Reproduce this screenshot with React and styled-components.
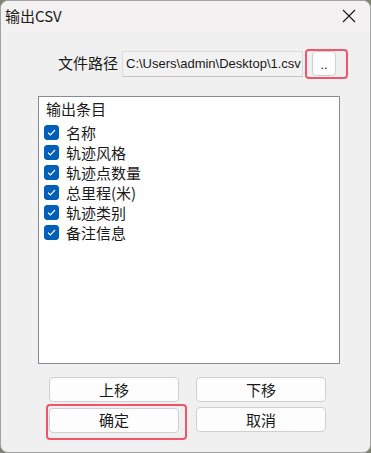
import { useState } from 'react';
import styled, { createGlobalStyle } from 'styled-components';

const fields = ['名称', '轨迹风格', '轨迹点数量', '总里程(米)', '轨迹类别', '备注信息'];

const GlobalStyle = createGlobalStyle`
  html, body {
    margin: 0;
    padding: 0;
    background: #7d8472;
  }
  * {
    box-sizing: border-box;
  }
`;

const Window = styled.div`
  width: 371px;
  height: 453px;
  background: #f0f0f0;
  border: 1px solid #a3a3a3;
  border-radius: 8px;
  overflow: hidden;
  display: flex;
  flex-direction: column;
  font-family: "Noto Sans CJK SC", "Liberation Sans", sans-serif;
  color: #1a1a1a;
`;

const TitleBar = styled.div`
  height: 31px;
  background: #f3f1f1;
  display: flex;
  align-items: center;
  justify-content: space-between;
  padding: 0 14px 2px 4px;
`;

const Title = styled.span`
  font-size: 15px;
  line-height: 20px;
`;

const CloseButton = styled.div`
  width: 14px;
  height: 14px;
  display: flex;
  cursor: pointer;
`;

const PathRow = styled.div`
  display: flex;
  align-items: flex-start;
  margin-top: 17px;
  padding-left: 57px;
`;

const Label = styled.span`
  font-size: 15px;
  line-height: 20px;
  margin-top: 4px;
  width: 64px;
  white-space: nowrap;
`;

const PathInput = styled.div`
  width: 181px;
  height: 26px;
  margin-top: 2px;
  background: #f2f2f2;
  border: 1px solid #dcdcdc;
  border-bottom-color: #c4c4c4;
  font-family: "Liberation Sans", Arial, sans-serif;
  font-size: 13px;
  line-height: 24px;
  padding-left: 3px;
  white-space: nowrap;
  overflow: hidden;
`;

const Highlight = styled.div`
  position: relative;
  &::after {
    content: '';
    position: absolute;
    left: ${({ $l }) => $l}px;
    top: ${({ $t }) => $t}px;
    right: ${({ $r }) => $r}px;
    bottom: ${({ $b }) => $b}px;
    border: 2px solid #f0566a;
    border-radius: 4px;
    pointer-events: none;
  }
`;

const BrowseButton = styled.button`
  width: 24px;
  height: 25px;
  margin: 2px 0 0 9px;
  padding: 0;
  background: #fdfdfd;
  border: 1px solid #d0d0d0;
  border-radius: 4px;
  font-family: "Liberation Sans", Arial, sans-serif;
  font-size: 13px;
  line-height: 26px;
  color: #1a1a1a;
`;

const ListBox = styled.div`
  margin: 19px 0 0 37px;
  width: 302px;
  height: 268px;
  background: #ffffff;
  border: 1px solid #878b96;
  padding: 2px 0 0 0;
`;

const ListHeader = styled.div`
  font-size: 15px;
  line-height: 20px;
  padding-left: 7px;
`;

const Items = styled.div`
  margin-top: 3px;
  display: flex;
  flex-direction: column;
`;

const Item = styled.label`
  height: 20px;
  display: flex;
  align-items: center;
  gap: 7px;
  padding-left: 5px;
  font-size: 15px;
  cursor: pointer;
`;

const CheckBox = styled.span`
  width: 15px;
  height: 15px;
  border-radius: 3px;
  background: ${({ $checked }) => ($checked ? '#005fb8' : '#ffffff')};
  border: 1px solid ${({ $checked }) => ($checked ? '#005fb8' : '#8a8a8a')};
  display: flex;
  align-items: center;
  justify-content: center;
`;

const ButtonGrid = styled.div`
  margin: 13px 0 0 48px;
  display: grid;
  grid-template-columns: 130px 130px;
  column-gap: 17px;
  row-gap: 5px;
`;

const Button = styled.button`
  width: 130px;
  height: 25px;
  padding: 0;
  background: #fdfdfd;
  border: 1px solid #d0d0d0;
  border-radius: 4px;
  font-family: "Noto Sans CJK SC", sans-serif;
  font-size: 15px;
  font-weight: 400;
  line-height: 22px;
  color: #1a1a1a;
`;

const App = () => {
    const [checked, setChecked] = useState(fields.map(() => true));

    const toggle = (i) => {
        setChecked(c => c.map((v, j) => (j === i ? !v : v)));
    };

    return (
        <>
            <GlobalStyle />
            <Window>
                <TitleBar>
                    <Title>输出CSV</Title>
                    <CloseButton>
                        <svg width="14" height="14" viewBox="0 0 14 14">
                            <path d="M1 1 L13 13 M13 1 L1 13" stroke="#1a1a1a" strokeWidth="1.1" fill="none" />
                        </svg>
                    </CloseButton>
                </TitleBar>
                <PathRow>
                    <Label>文件路径</Label>
                    <PathInput>C:\Users\admin\Desktop\1.csv</PathInput>
                    <Highlight $l={2} $t={0} $r={-12} $b={-3}>
                        <BrowseButton>..</BrowseButton>
                    </Highlight>
                </PathRow>
                <ListBox>
                    <ListHeader>输出条目</ListHeader>
                    <Items>
                        {fields.map((f, i) => (
                            <Item key={f} onClick={() => toggle(i)}>
                                <CheckBox $checked={checked[i]}>
                                    {checked[i] && (
                                        <svg width="11" height="11" viewBox="0 0 11 11">
                                            <path d="M2 5.8 L4.4 8 L9 3" stroke="#ffffff" strokeWidth="1.2" fill="none" />
                                        </svg>
                                    )}
                                </CheckBox>
                                <span>{f}</span>
                            </Item>
                        ))}
                    </Items>
                </ListBox>
                <ButtonGrid>
                    <Button>上移</Button>
                    <Button>下移</Button>
                    <Highlight $l={-3} $t={-3} $r={-8} $b={-7}>
                        <Button>确定</Button>
                    </Highlight>
                    <Button>取消</Button>
                </ButtonGrid>
            </Window>
        </>
    );
};

export default App;
